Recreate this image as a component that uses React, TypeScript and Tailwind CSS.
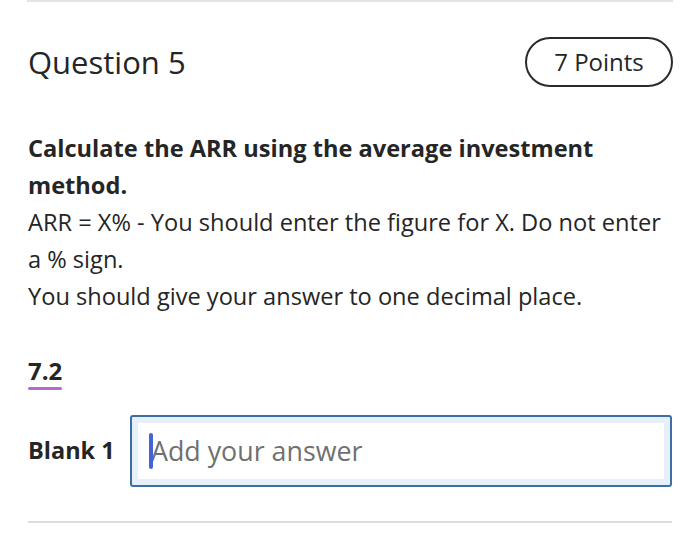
export default function App() {
  return (
    <div
      className="w-[700px] h-[552px] bg-white text-[#252525] overflow-hidden"
      style={{ fontFamily: '"Open Sans", "Noto Sans", sans-serif' }}
    >
      <div className="mx-[27px] border-t-2 border-[#e4e4e4]" />
      <div className="pl-[28px] pr-[28px]">
        <div className="flex items-center justify-between mt-[35px] h-[50px]">
          <h2 className="text-[31px] leading-none">Question 5</h2>
          <div className="h-[50px] w-[148px] rounded-full border-2 border-[#2a2a2a] flex items-center justify-center text-[24px] -mr-[1px]">
            7 Points
          </div>
        </div>

        <div className="mt-[43px] text-[23.6px] leading-[37px]">
          <p className="font-bold">Calculate the ARR using the average investment method.</p>
          <p>ARR = X% - You should enter the figure for X. Do not enter a % sign.</p>
          <p>You should give your answer to one decimal place.</p>
        </div>

        <div className="mt-[41px] inline-block">
          <div className="font-bold text-[24px] leading-[30px]">7.2</div>
          <div className="mt-[1px] h-[3px] bg-[#b66ad0] rounded-full" />
        </div>

        <div className="flex items-center mt-[25px]">
          <div className="font-bold text-[23.5px] w-[102px]">Blank 1</div>
          <div className="flex-1 h-[72px] rounded-[3px] border-2 border-[#3c6ea8] bg-[#e5f0fb] p-[6px]">
            <div className="relative h-full bg-white flex items-center pl-[13px]">
              <div className="absolute left-[11px] top-[10px] w-[4px] h-[36px] rounded-full bg-[#4562d8]" />
              <span className="text-[26.8px] text-[#707070]">Add your answer</span>
            </div>
          </div>
        </div>

        <div className="mt-[34px] border-t-2 border-[#dcdcdc]" />
      </div>
    </div>
  );
}
